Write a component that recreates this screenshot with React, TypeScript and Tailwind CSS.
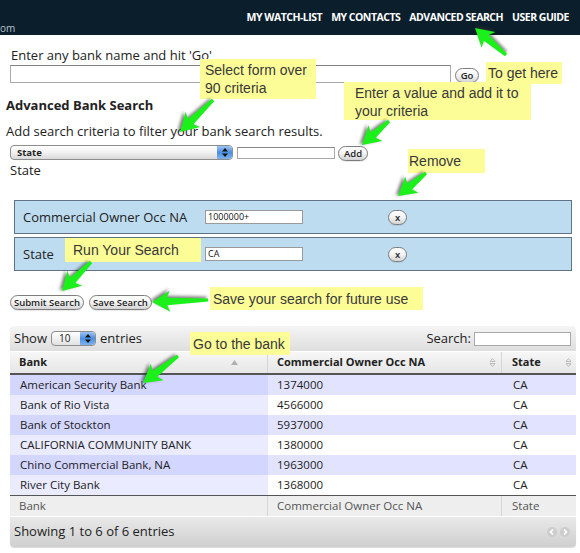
import type { ReactNode } from "react";

const ROWS: [string, string][] = [
  ["American Security Bank", "1374000"],
  ["Bank of Rio Vista", "4566000"],
  ["Bank of Stockton", "5937000"],
  ["CALIFORNIA COMMUNITY BANK", "1380000"],
  ["Chino Commercial Bank, NA", "1963000"],
  ["River City Bank", "1368000"],
];

const NAV = ["MY WATCH-LIST", "MY CONTACTS", "ADVANCED SEARCH", "USER GUIDE"];

// callouts drawn over the page
const NOTES: { x: number; y: number; w: number; h: number; pl: number; lines: string[] }[] = [
  { x: 200, y: 59, w: 116, h: 40, pl: 5, lines: ["Select form over", "90 criteria"] },
  { x: 486, y: 62, w: 76, h: 22, pl: 2, lines: ["To get here"] },
  { x: 344, y: 82, w: 187, h: 38, pl: 11, lines: ["Enter a value and add it to", "your criteria"] },
  { x: 408, y: 149, w: 77, h: 24, pl: 1, lines: ["Remove"] },
  { x: 65, y: 238, w: 136, h: 24, pl: 8, lines: ["Run Your Search"] },
  { x: 210, y: 287, w: 213, h: 23, pl: 3, lines: ["Save your search for future use"] },
  { x: 190, y: 332, w: 100, h: 23, pl: 3, lines: ["Go to the bank"] },
];

// green arrows: tail -> tip
const ARROWS: [number, number, number, number][] = [
  [506, 55, 475, 28],
  [213, 100, 180, 132],
  [389, 121, 362, 145],
  [426, 173, 398, 196],
  [91, 262, 62, 291],
  [208, 300, 152, 302],
  [178, 356, 143, 383],
];

function Pill({ children, className = "" }: { children: ReactNode; className?: string }) {
  return (
    <span
      className={
        "inline-flex h-[15px] items-center justify-center rounded-full border border-[#7d7d7d] bg-gradient-to-b from-white via-[#f3f3f3] to-[#d4d4d4] text-[9.5px] font-semibold leading-none text-[#1e1e1e] shadow-[0_1px_0_rgba(0,0,0,0.08)] " +
        className
      }
    >
      {children}
    </span>
  );
}

function Stepper() {
  return (
    <span className="flex h-full w-[15px] flex-col items-center justify-center rounded-r-[4px] bg-gradient-to-b from-[#9cc4f2] via-[#4a8fe0] to-[#7fb2ee]">
      <svg width="6" height="9" viewBox="0 0 6 9">
        <path d="M3 0 L6 3.5 L0 3.5 Z M3 9 L6 5.5 L0 5.5 Z" fill="#111" />
      </svg>
    </span>
  );
}

function SortBoth() {
  return (
    <svg width="7" height="9" viewBox="0 0 7 9">
      <path d="M3.5 0.5 L6 3.5 L1 3.5 Z M3.5 8.5 L6 5.5 L1 5.5 Z" fill="none" stroke="#b5b5b5" strokeWidth="0.9" />
    </svg>
  );
}

function Arrows() {
  return (
    <svg className="pointer-events-none absolute left-0 top-0" width="580" height="553">
      <defs>
        <filter id="blur" x="-50%" y="-50%" width="200%" height="200%">
          <feGaussianBlur stdDeviation="1.4" />
        </filter>
      </defs>
      {ARROWS.map(([x1, y1, x2, y2], i) => {
        const L = Math.hypot(x2 - x1, y2 - y1);
        const a = (Math.atan2(y2 - y1, x2 - x1) * 180) / Math.PI;
        const pts = `0,-1.6 ${L - 15},-3.8 ${L - 18},-10.5 ${L},0 ${L - 18},10.5 ${L - 15},3.8 0,1.6`;
        return (
          <g key={i} transform={`translate(${x1} ${y1}) rotate(${a})`}>
            <polygon points={pts} fill="#2a2a2a" opacity="0.6" filter="url(#blur)" transform="translate(1.5 2)" />
            <polygon points={pts} fill="#1bf01b" />
          </g>
        );
      })}
    </svg>
  );
}

export default function App() {
  return (
    <div className="relative h-[553px] w-[580px] overflow-hidden bg-white font-['Open_Sans',sans-serif] text-[#222]">
      <header className="flex h-[35px] justify-between bg-[#0a1e2c] pr-[11px]">
        <span className="self-end pb-[2px] text-[10px] leading-none text-[#b9c3cb]">om</span>
        <nav className="flex items-center gap-[9px] pt-[1px] text-[10.5px] font-bold tracking-[-0.5px] text-white">
          {NAV.map((n) => (
            <span key={n}>{n}</span>
          ))}
        </nav>
      </header>

      <div className="px-[10px]">
        <p className="ml-[1px] mt-[11px] text-[13px] leading-[18px]">Enter any bank name and hit 'Go'</p>
        <div className="mt-[1px] flex h-[18px] items-center">
          <div className="h-[18px] w-[441px] border border-[#a9a9a9] border-t-[#808080] bg-white" />
          <Pill className="ml-[4px] mt-[3px] w-[24px]">Go</Pill>
        </div>
        <h2 className="-ml-[4px] mt-[13px] text-[13px] font-bold leading-[18px]">Advanced Bank Search</h2>
        <p className="-ml-[4px] mt-[8px] text-[13px] leading-[18px]">
          Add search criteria to filter your bank search results.
        </p>
        <div className="mt-[5px] flex h-[15px] items-center">
          <div className="flex h-[15px] w-[223px] items-stretch rounded-[4px] border border-[#8d8d8d] bg-gradient-to-b from-white via-[#f1f1f1] to-[#d9d9d9]">
            <span className="flex-1 pl-[6px] text-[9.5px] font-bold leading-[13px]">State</span>
            <Stepper />
          </div>
          <div className="ml-[4px] h-[12px] w-[98px] border border-[#a9a9a9] border-t-[#888] bg-white" />
          <Pill className="ml-[3px] mt-[2px] w-[30px]">Add</Pill>
        </div>
        <p className="mt-[1px] text-[13px] leading-[18px]">State</p>
      </div>

      <div className="ml-[14px] mt-[21px] flex w-[558px] flex-col gap-[3px]">
        {[
          ["Commercial Owner Occ NA", "1000000+"],
          ["State", "CA"],
        ].map(([label, value]) => (
          <div
            key={label}
            className="flex h-[34px] items-center border-[1.5px] border-[#5f7383] bg-[#bedcef] pl-[8px]"
          >
            <span className="w-[182px] text-[13px] leading-none">{label}</span>
            <span className="flex h-[14px] w-[98px] items-center border border-[#9a9a9a] bg-white pl-[2px] text-[9px] text-[#111]">
              {value}
            </span>
            <Pill className="ml-[85px] mt-[1px] w-[19px]">x</Pill>
          </div>
        ))}
      </div>

      <div className="ml-[10px] mt-[24px] flex gap-[5px]">
        <Pill className="w-[74px]">Submit Search</Pill>
        <Pill className="w-[63px]">Save Search</Pill>
      </div>

      <div className="ml-[10px] mt-[16px] w-[566px] text-[11.5px]">
        <div className="flex h-[25px] items-center rounded-t-[4px] bg-gradient-to-b from-[#f5f5f5] to-[#dedede] pl-[4px] pr-[5px] text-[13px]">
          <span>Show</span>
          <span className="ml-[4px] flex h-[15px] w-[45px] items-stretch rounded-[4px] border border-[#8d8d8d] bg-gradient-to-b from-white to-[#e2e2e2]">
            <span className="flex-1 pl-[7px] text-[10px] leading-[13px]">10</span>
            <Stepper />
          </span>
          <span className="ml-[4px]">entries</span>
          <span className="ml-auto">Search:</span>
          <span className="ml-[3px] h-[14px] w-[97px] border border-[#a9a9a9] bg-white" />
        </div>
        <div className="mt-[1px] flex h-[23px] border-b-2 border-[#555] bg-gradient-to-b from-[#f7f7f7] to-[#e6e6e6] text-[11px] font-bold">
          <div className="flex w-[258px] items-center justify-between border-r border-[#d5d5d5] pl-[9px] pr-[29px]">
            <span>Bank</span>
            <svg width="7" height="5" viewBox="0 0 7 5">
              <path d="M3.5 0 L7 5 L0 5 Z" fill="#b0b0b0" />
            </svg>
          </div>
          <div className="flex w-[234px] items-center justify-between border-r border-[#d5d5d5] pl-[9px] pr-[5px]">
            <span>Commercial Owner Occ NA</span>
            <SortBoth />
          </div>
          <div className="flex flex-1 items-center justify-between pl-[10px] pr-[4px]">
            <span>State</span>
            <SortBoth />
          </div>
        </div>
        <div className="border-b border-[#555]">
          {ROWS.map(([bank, amount], i) => (
            <div key={bank} className={"flex h-[20px] items-center " + (i % 2 === 0 ? "bg-[#e2e4ff]" : "bg-white")}>
              <span
                className={
                  "flex h-full w-[258px] items-center pl-[10px] " + (i % 2 === 0 ? "bg-[#d3d6ff]" : "bg-[#eaebff]")
                }
              >
                {bank}
              </span>
              <span className="w-[234px] pl-[9px]">{amount}</span>
              <span className="pl-[11px]">CA</span>
            </div>
          ))}
        </div>
        <div className="flex h-[20px] bg-[#eeeeee] text-[#555]">
          <span className="flex w-[258px] items-center border-r border-[#d5d5d5] pl-[9px]">Bank</span>
          <span className="flex w-[234px] items-center border-r border-[#d5d5d5] pl-[9px]">Commercial Owner Occ NA</span>
          <span className="flex items-center pl-[10px]">State</span>
        </div>
        <div className="mt-[1px] flex h-[30px] items-center justify-between rounded-b-[4px] bg-gradient-to-b from-[#e9e9e9] to-[#cfcfcf] pl-[4px] pr-[6px] text-[13px] shadow-[0_1px_1px_rgba(0,0,0,0.15)]">
          <span>Showing 1 to 6 of 6 entries</span>
          <span className="flex gap-[3px]">
            {["M6 2.5 L3.5 5 L6 7.5", "M4 2.5 L6.5 5 L4 7.5"].map((d) => (
              <svg key={d} width="10" height="10" viewBox="0 0 10 10">
                <circle cx="5" cy="5" r="5" fill="#cdcdcd" />
                <path d={d} fill="none" stroke="#fff" strokeWidth="1.6" />
              </svg>
            ))}
          </span>
        </div>
      </div>

      {NOTES.map((n) => (
        <div
          key={n.lines[0]}
          className="absolute bg-[#fdfd98] font-['Liberation_Sans',Arial,sans-serif] text-[14px] leading-[18px] text-[#383838]"
          style={{ left: n.x, top: n.y, width: n.w, height: n.h, paddingLeft: n.pl, paddingTop: n.h > 30 ? 2 : (n.h - 18) / 2 }}
        >
          {n.lines.map((l) => (
            <div key={l}>{l}</div>
          ))}
        </div>
      ))}

      <Arrows />
    </div>
  );
}
